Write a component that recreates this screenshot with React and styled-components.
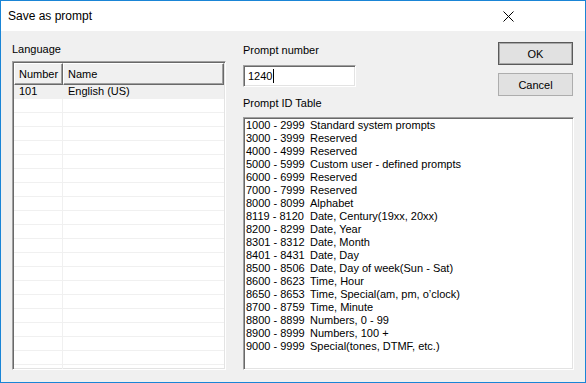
import React from 'react';
import styled, { createGlobalStyle, css } from 'styled-components';

const GlobalStyle = createGlobalStyle`
  html, body {
    margin: 0;
    padding: 0;
    background: #ffffff;
  }
  * {
    box-sizing: border-box;
  }
`;

const sunken = css`
  border: 1px solid;
  border-color: #a0a0a0 #ffffff #ffffff #a0a0a0;
  box-shadow: inset 1px 1px 0 #696969, inset -1px -1px 0 #e3e3e3;
`;

const Window = styled.div`
  width: 586px;
  height: 383px;
  border: 1px solid #1a85d6;
  display: flex;
  flex-direction: column;
  font-family: 'Liberation Sans', Arial, sans-serif;
  font-size: 11px;
  color: #000;
  background: #f0f0f0;
`;

const TitleBar = styled.div`
  height: 30px;
  flex: none;
  background: #fff;
  display: flex;
  align-items: center;
  justify-content: space-between;
  padding: 0 71px 0 7px;
`;

const Title = styled.span`
  font-size: 12px;
  padding-bottom: 1px;
`;

const CloseIcon = styled.svg`
  width: 11px;
  height: 11px;
  display: block;
`;

const Body = styled.div`
  flex: 1;
  display: flex;
  gap: 17px;
  padding: 11px 11px 12px 11px;
  min-height: 0;
`;

const LeftColumn = styled.div`
  width: 214px;
  display: flex;
  flex-direction: column;
`;

const RightColumn = styled.div`
  flex: 1;
  display: flex;
  flex-direction: column;
`;

const Label = styled.div`
  line-height: 13px;
  margin-top: ${(p) => p.$top || 0}px;
`;

const ListBox = styled.div`
  ${sunken};
  margin-top: 5px;
  flex: 1;
  background: #fff;
  overflow: hidden;
  padding: 1px;
`;

const Row = styled.div`
  display: grid;
  grid-template-columns: 49px 1fr;
  height: ${(p) => (p.$header ? 22 : 14)}px;
  background: ${(p) => (p.$selected ? '#f0f0f0' : 'transparent')};
  border-bottom: ${(p) => (p.$header ? 'none' : '1px solid #f0f0f0')};
`;

const HeadCell = styled.div`
  background: #f0f0f0;
  border: 1px solid;
  border-color: #ffffff #696969 #696969 #ffffff;
  box-shadow: inset -1px -1px 0 #a0a0a0;
  padding-left: 4px;
  display: flex;
  align-items: center;
`;

const Cell = styled.div`
  padding-left: 5px;
  line-height: 13px;
  border-right: ${(p) => (p.$first ? '1px solid #f0f0f0' : 'none')};
`;

const TopRow = styled.div`
  display: flex;
  justify-content: space-between;
`;

const Fields = styled.div`
  display: flex;
  flex-direction: column;
`;

const Input = styled.div`
  ${sunken};
  margin-top: 8px;
  width: 113px;
  height: 22px;
  background: #fff;
  display: flex;
  align-items: center;
  padding-left: 4px;
`;

const Caret = styled.span`
  display: inline-block;
  width: 1px;
  height: 14px;
  background: #000;
  margin-left: 1px;
`;

const Buttons = styled.div`
  display: flex;
  flex-direction: column;
  gap: 8px;
  margin-right: 1px;
`;

const Button = styled.button`
  width: 75px;
  height: 23px;
  font-family: inherit;
  font-size: 11px;
  color: #000;
  background: #e1e1e1;
  border: 1px solid ${(p) => (p.$default ? '#5a5a5a' : '#adadad')};
  box-shadow: ${(p) => (p.$default ? 'inset 0 0 0 1px #a8a8a8' : 'none')};
  padding: 0;
`;

const IdTable = styled.div`
  ${sunken};
  margin-top: 7px;
  flex: 1;
  background: #fff;
  padding: 1px 2px;
  overflow: hidden;
`;

const IdLine = styled.div`
  display: grid;
  grid-template-columns: 64px 1fr;
  line-height: 13px;
  white-space: nowrap;
`;

const languages = [{ number: '101', name: 'English (US)' }];

const promptIds = [
  ['1000 - 2999', 'Standard system prompts'],
  ['3000 - 3999', 'Reserved'],
  ['4000 - 4999', 'Reserved'],
  ['5000 - 5999', 'Custom user - defined prompts'],
  ['6000 - 6999', 'Reserved'],
  ['7000 - 7999', 'Reserved'],
  ['8000 - 8099', 'Alphabet'],
  ['8119 - 8120', 'Date, Century(19xx, 20xx)'],
  ['8200 - 8299', 'Date, Year'],
  ['8301 - 8312', 'Date, Month'],
  ['8401 - 8431', 'Date, Day'],
  ['8500 - 8506', 'Date, Day of week(Sun - Sat)'],
  ['8600 - 8623', 'Time, Hour'],
  ['8650 - 8653', 'Time, Special(am, pm, o\u2019clock)'],
  ['8700 - 8759', 'Time, Minute'],
  ['8800 - 8899', 'Numbers, 0 - 99'],
  ['8900 - 8999', 'Numbers, 100 +'],
  ['9000 - 9999', 'Special(tones, DTMF, etc.)'],
];

export default function App() {
  const emptyRows = Array.from({ length: 22 });

  return (
    <>
      <GlobalStyle />
      <Window>
        <TitleBar>
          <Title>Save as prompt</Title>
          <CloseIcon viewBox="0 0 11 11">
            <path d="M0.5 0.5 L10.5 10.5 M10.5 0.5 L0.5 10.5" stroke="#000" strokeWidth="1" fill="none" />
          </CloseIcon>
        </TitleBar>
        <Body>
          <LeftColumn>
            <Label $top={1}>Language</Label>
            <ListBox>
              <Row $header>
                <HeadCell>Number</HeadCell>
                <HeadCell>Name</HeadCell>
              </Row>
              {languages.map((l) => (
                <Row key={l.number} $selected>
                  <Cell $first>{l.number}</Cell>
                  <Cell>{l.name}</Cell>
                </Row>
              ))}
              {emptyRows.map((_, i) => (
                <Row key={i}>
                  <Cell $first />
                  <Cell />
                </Row>
              ))}
            </ListBox>
          </LeftColumn>
          <RightColumn>
            <TopRow>
              <Fields>
                <Label $top={2}>Prompt number</Label>
                <Input>
                  1240
                  <Caret />
                </Input>
                <Label $top={10}>Prompt ID Table</Label>
              </Fields>
              <Buttons>
                <Button $default>OK</Button>
                <Button>Cancel</Button>
              </Buttons>
            </TopRow>
            <IdTable>
              {promptIds.map(([range, desc]) => (
                <IdLine key={range}>
                  <span>{range}</span>
                  <span>{desc}</span>
                </IdLine>
              ))}
            </IdTable>
          </RightColumn>
        </Body>
      </Window>
    </>
  );
}
